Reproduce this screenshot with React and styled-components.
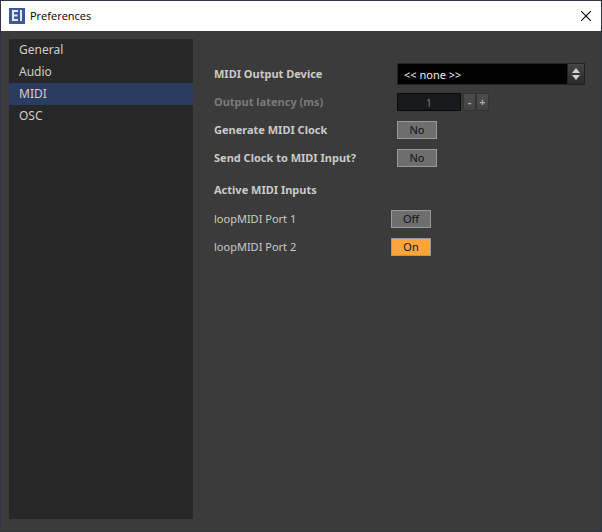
import React, { useState } from "react";
import styled, { createGlobalStyle } from "styled-components";

const GlobalStyle = createGlobalStyle`
  * { box-sizing: border-box; }
  body { margin: 0; background: #3b3b3b; font-family: "Noto Sans", Tahoma, sans-serif; }
  button, input, select { font: inherit; margin: 0; padding: 0; border-radius: 0; }
`;

const Window = styled.div`
  min-height: 100vh;
  display: flex;
  flex-direction: column;
  background: #3b3b3b;
  border: 1px solid #2f3743;
`;

const TitleBar = styled.header`
  height: 30px;
  display: flex;
  align-items: center;
  padding: 0 10px 0 8px;
  background: #fff;
  color: #000;
`;

const AppIcon = styled.svg`
  width: 16px;
  height: 16px;
`;

const Title = styled.h1`
  flex: 1;
  margin: 0 0 0 5px;
  font: 400 11px/16px "Open Sans", "Segoe UI", sans-serif;
`;

const CloseButton = styled.button`
  display: flex;
  width: 10px;
  height: 28px;
  align-items: center;
  justify-content: center;
  border: 0;
  background: none;
`;

const Body = styled.div`
  flex: 1;
  display: flex;
  padding: 8px 16px 12px 8px;
`;

const Sidebar = styled.nav`
  flex: 0 0 184px;
  display: flex;
  flex-direction: column;
  background: #272727;
`;

const NavItem = styled.button`
  height: 22px;
  padding-left: 10px;
  border: 0;
  background: ${(p) => (p.$active ? "#2b3c61" : "transparent")};
  color: #cfcfcf;
  font-size: 12px;
  line-height: 22px;
  text-align: left;
`;

const Panel = styled.main`
  flex: 1;
  padding: 21px 0 0 21px;
  color: #cacaca;
  font-size: 11px;
`;

const Row = styled.div`
  display: grid;
  grid-template-columns: ${(p) => (p.$port ? "177px" : "183px")} 1fr;
  align-items: center;
  height: 28px;
`;

const Label = styled.label`
  font-weight: ${(p) => (p.$plain ? 400 : 700)};
  line-height: 16px;
  color: ${(p) => (p.$dim ? "#7a7a7a" : "#cacaca")};
`;

const Heading = styled.h2`
  margin: 4px 0 1px;
  font-size: 11px;
  font-weight: 700;
  line-height: 28px;
`;

const SelectBox = styled.div`
  display: grid;
  grid-template-columns: 1fr 18px;
  height: 22px;
`;

const Select = styled.select`
  grid-area: 1 / 1 / 2 / 3;
  appearance: none;
  width: 100%;
  padding-left: 6px;
  border: 1px solid #242424;
  background: #000;
  color: #efefef;
`;

const SelectArrows = styled.span`
  grid-area: 1 / 2 / 2 / 3;
  display: flex;
  align-items: center;
  justify-content: center;
  border: 1px solid #202020;
  background: linear-gradient(#454545, #292929);
  pointer-events: none;
`;

const Stepper = styled.div`
  display: flex;
  height: 18px;
`;

const NumberInput = styled.input`
  width: 64px;
  margin-right: 2px;
  border: 1px solid #090909;
  background: #171b1c;
  color: #777;
  text-align: center;
`;

const StepButton = styled.button`
  width: 13px;
  border: 1px solid #343434;
  background: linear-gradient(#4d4d4d, #424242);
  color: #aaa;
  font-size: 11px;
  font-weight: 700;
  line-height: 16px;
`;

const Toggle = styled.button`
  width: 40px;
  height: 18px;
  border: 1px solid #999;
  background: ${(p) => (p.$on ? "#fda53b" : "#6e6e6e")};
  color: #111;
  line-height: 16px;
`;

const SECTIONS = ["General", "Audio", "MIDI", "OSC"];

function ToggleRow({ id, label, words, initial = false, port = false }) {
  const [on, setOn] = useState(initial);
  return (
    <Row $port={port}>
      <Label htmlFor={id} $plain={port}>{label}</Label>
      <Toggle id={id} type="button" aria-pressed={on} $on={on} onClick={() => setOn(!on)}>
        {on ? words[1] : words[0]}
      </Toggle>
    </Row>
  );
}

export default function App() {
  const [section, setSection] = useState("MIDI");
  return (
    <>
      <GlobalStyle />
      <Window>
        <TitleBar>
          <AppIcon viewBox="0 0 16 16" aria-hidden="true">
            <path d="M0 0h16v16H0z" fill="#3c5a94" />
            <path d="M9 3H4v9h5M4 7.5h4.5M12 2v11" fill="none" stroke="#e2e7f0" strokeWidth="2" />
          </AppIcon>
          <Title>Preferences</Title>
          <CloseButton type="button" aria-label="Close">
            <svg width="10" height="10" viewBox="0 0 10 10">
              <path d="M0 0l10 10M10 0L0 10" stroke="#000" strokeWidth="1.1" />
            </svg>
          </CloseButton>
        </TitleBar>
        <Body>
          <Sidebar aria-label="Sections">
            {SECTIONS.map((name) => (
              <NavItem key={name} type="button" $active={name === section} onClick={() => setSection(name)}>
                {name}
              </NavItem>
            ))}
          </Sidebar>
          <Panel>
            <Row>
              <Label htmlFor="device">MIDI Output Device</Label>
              <SelectBox>
                <Select id="device">
                  <option>{"<< none >>"}</option>
                </Select>
                <SelectArrows>
                  <svg width="8" height="12" viewBox="0 0 8 12">
                    <path d="M4 0l4 5H0zM4 12l4-5H0z" fill="#d2d2d2" />
                  </svg>
                </SelectArrows>
              </SelectBox>
            </Row>
            <Row>
              <Label htmlFor="latency" $dim>Output latency (ms)</Label>
              <Stepper>
                <NumberInput id="latency" type="text" defaultValue="1" disabled />
                <StepButton type="button" aria-label="Decrease latency" disabled>-</StepButton>
                <StepButton type="button" aria-label="Increase latency" disabled>+</StepButton>
              </Stepper>
            </Row>
            <ToggleRow id="generate" label="Generate MIDI Clock" words={["No", "Yes"]} />
            <ToggleRow id="send" label="Send Clock to MIDI Input?" words={["No", "Yes"]} />
            <Heading>Active MIDI Inputs</Heading>
            <ToggleRow id="port1" label="loopMIDI Port 1" words={["Off", "On"]} port />
            <ToggleRow id="port2" label="loopMIDI Port 2" words={["Off", "On"]} port initial />
          </Panel>
        </Body>
      </Window>
    </>
  );
}
